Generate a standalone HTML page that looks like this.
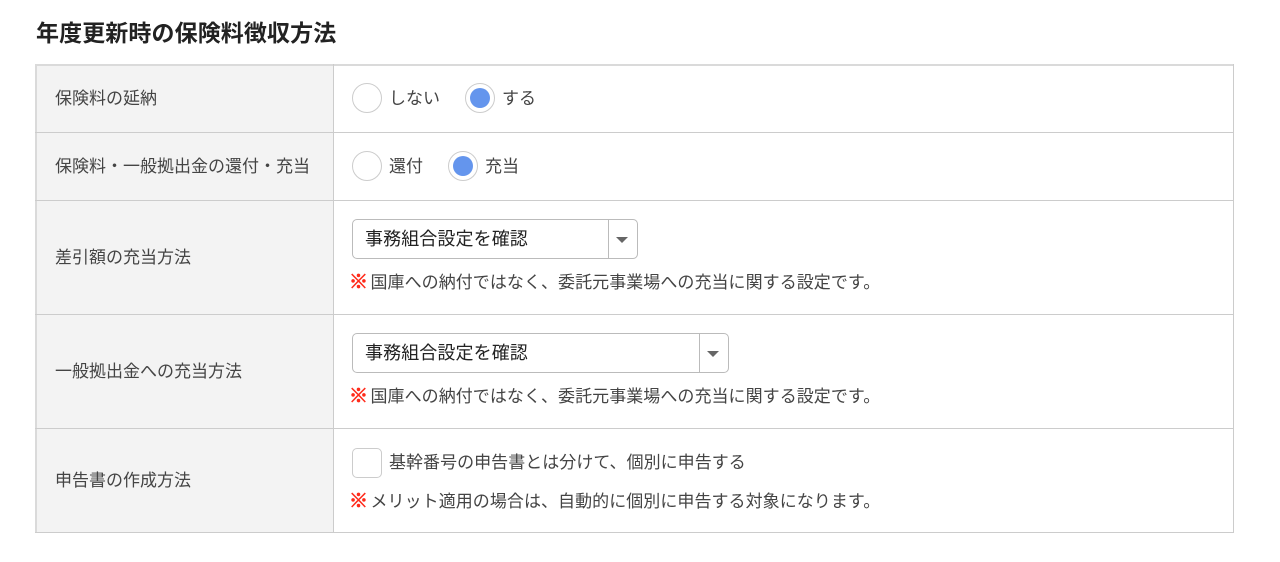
<!DOCTYPE html>
<html lang="ja"><head><meta charset="utf-8"><style>
html,body{margin:0;padding:0;background:#fff;width:1280px;height:562px;overflow:hidden}
body{font-family:"Liberation Sans","Noto Sans CJK JP",sans-serif;color:#444;position:relative}
div,span{position:absolute;box-sizing:border-box}
.t{font-size:17px;line-height:24px;white-space:nowrap;color:#444}
.n{letter-spacing:.05px}
.b{background:#ccc}
.r{width:30px;height:30px;border:1px solid #ccc;border-radius:50%;background:#fff}
.r.on::after{content:"";position:absolute;left:4px;top:4px;width:20px;height:20px;border-radius:50%;background:#6495ed}
.s{height:40px;border:1px solid #bbb;border-radius:5px;background:#fff}
.s .v{left:12px;top:7px;font-size:18px;line-height:24px;color:#222;white-space:nowrap;letter-spacing:.1px}
.s .d{top:0;bottom:0;right:28px;width:1px;background:#bbb}
.s .a{right:9px;top:17px;width:0;height:0;border-left:6px solid transparent;border-right:6px solid transparent;border-top:6px solid #666}
.m{color:#ff2a1a;font-weight:bold;font-size:19px;line-height:24px;white-space:nowrap;left:349px;-webkit-text-stroke:.7px #ff2a1a}
</style></head><body>
<div style="left:36px;top:17px;font-size:23px;line-height:32px;font-weight:bold;color:#222;white-space:nowrap;letter-spacing:.1px">年度更新時の保険料徴収方法</div>
<div style="left:36px;top:65px;width:297px;height:467px;background:#f3f3f3"></div>
<div style="left:35px;top:64px;width:2px;height:469px;background:#dadada"></div>
<div style="left:35px;top:64px;width:1199px;height:2px;background:#dadada"></div>
<div class="b" style="left:35px;top:132px;width:1199px;height:1px"></div>
<div class="b" style="left:35px;top:200px;width:1199px;height:1px"></div>
<div class="b" style="left:35px;top:314px;width:1199px;height:1px"></div>
<div class="b" style="left:35px;top:428px;width:1199px;height:1px"></div>
<div class="b" style="left:35px;top:532px;width:1199px;height:1px"></div>
<div class="b" style="left:333px;top:64px;width:1px;height:469px"></div>
<div class="b" style="left:1233px;top:64px;width:1px;height:469px"></div>

<div class="t" style="left:55px;top:87px">保険料の延納</div>
<div class="t" style="left:55px;top:155px">保険料・一般拠出金の還付・充当</div>
<div class="t" style="left:55px;top:246px">差引額の充当方法</div>
<div class="t" style="left:55px;top:360px">一般拠出金への充当方法</div>
<div class="t" style="left:55px;top:469px">申告書の作成方法</div>

<div class="r" style="left:352px;top:83px"></div>
<div class="t" style="left:389px;top:87px">しない</div>
<div class="r on" style="left:464.5px;top:83px"></div>
<div class="t" style="left:502px;top:87px">する</div>

<div class="r" style="left:352px;top:151px"></div>
<div class="t" style="left:389px;top:155px">還付</div>
<div class="r on" style="left:448px;top:151px"></div>
<div class="t" style="left:485px;top:155px">充当</div>

<div class="s" style="left:352px;top:219px;width:286px"><span class="v">事務組合設定を確認</span><span class="d"></span><span class="a"></span></div>
<div class="m" style="top:271px">※</div>
<div class="t n" style="left:370.5px;top:271px">国庫への納付ではなく、委託元事業場への充当に関する設定です。</div>

<div class="s" style="left:352px;top:333px;width:377px"><span class="v">事務組合設定を確認</span><span class="d"></span><span class="a"></span></div>
<div class="m" style="top:385px">※</div>
<div class="t n" style="left:370.5px;top:385px">国庫への納付ではなく、委託元事業場への充当に関する設定です。</div>

<div style="left:352px;top:448px;width:30px;height:30px;border:1px solid #ccc;border-radius:5px;background:#fff"></div>
<div class="t" style="left:389px;top:451px;letter-spacing:.03px">基幹番号の申告書とは分けて、個別に申告する</div>
<div class="m" style="top:490px">※</div>
<div class="t n" style="left:370.5px;top:490px">メリット適用の場合は、自動的に個別に申告する対象になります。</div>
</body></html>
